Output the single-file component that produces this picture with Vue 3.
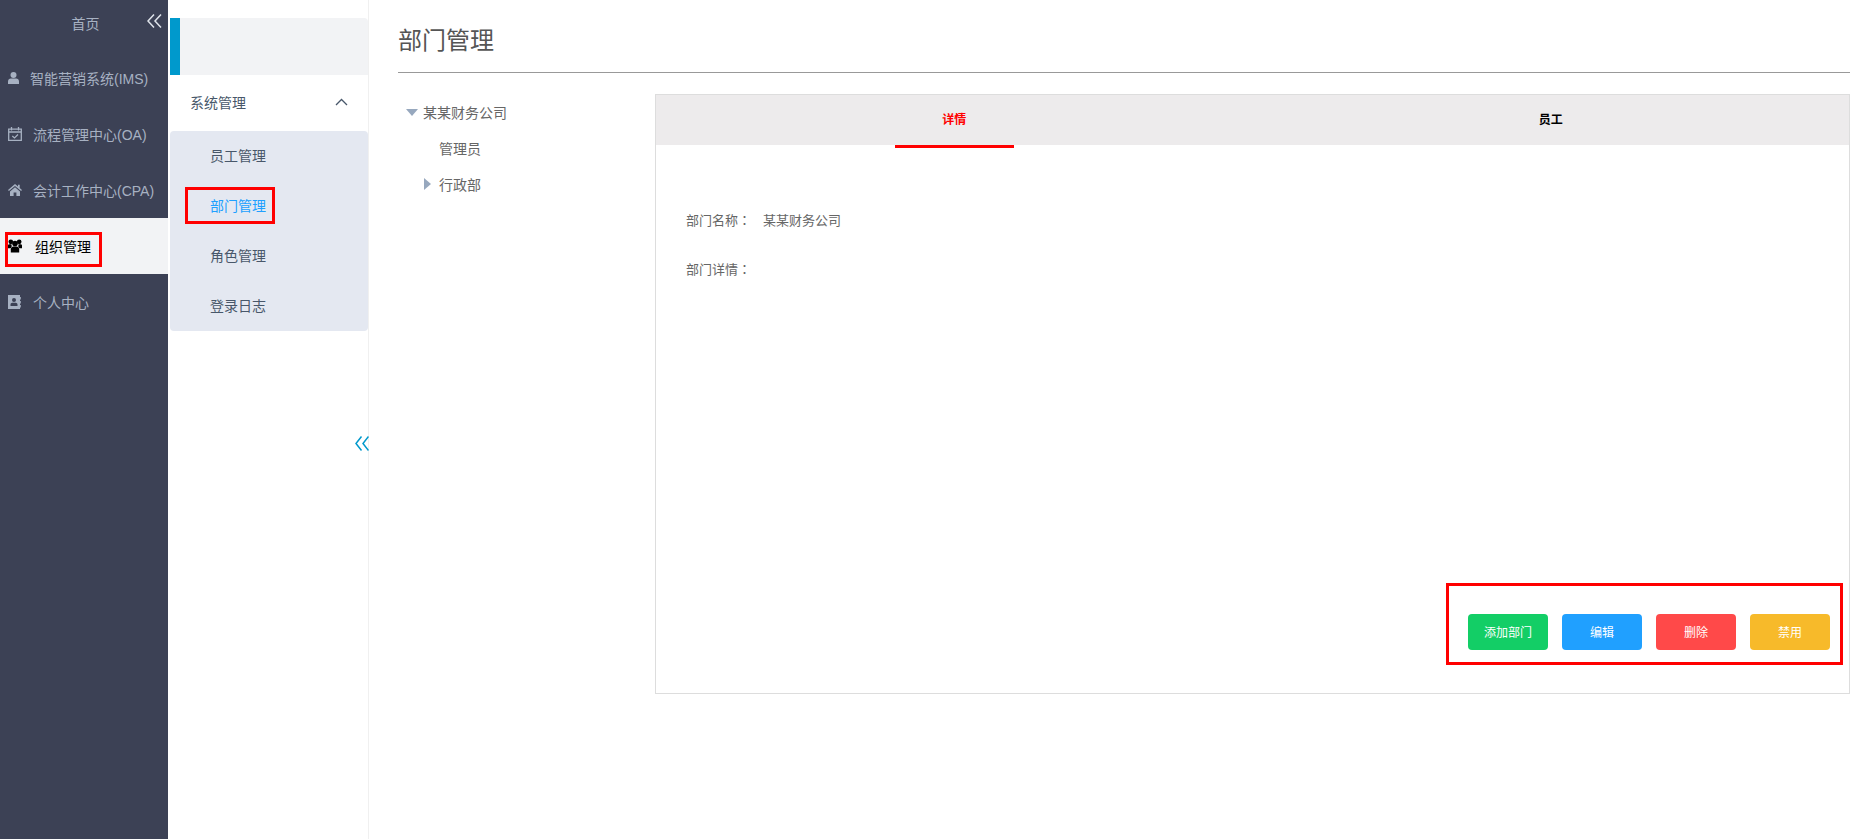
<script setup>
const navItems = [
  { label: '智能营销系统(IMS)', icon: 'user', gap: 'g1' },
  { label: '流程管理中心(OA)', icon: 'cal', gap: 'g2' },
  { label: '会计工作中心(CPA)', icon: 'home', gap: 'g3' },
  { label: '组织管理', icon: 'users', gap: 'g4', active: true },
  { label: '个人中心', icon: 'book', gap: 'g3' }
]
const subItems = [
  { label: '员工管理' },
  { label: '部门管理', active: true },
  { label: '角色管理' },
  { label: '登录日志' }
]
const buttons = [
  { label: '添加部门', color: 'green' },
  { label: '编辑', color: 'blue' },
  { label: '删除', color: 'red' },
  { label: '禁用', color: 'yellow' }
]
</script>

<template>
  <div class="page">
    <aside class="nav">
      <div class="nav-head">
        <span class="nav-home">首页</span>
        <svg class="nav-collapse" viewBox="0 0 15 14" width="15" height="14" fill="none" stroke="currentColor" stroke-width="1.5">
          <path d="M7 0.5 1 7l6 6.5M14 0.5 8 7l6 6.5" />
        </svg>
      </div>
      <div v-for="item in navItems" :key="item.label" class="nav-item" :class="{ on: item.active }">
        <span class="nav-icon">
          <svg v-if="item.icon === 'user'" viewBox="0 0 11 12" width="11" height="12" fill="currentColor">
            <circle cx="5.5" cy="3" r="3" />
            <path d="M0 12V9.2C0 7.6 1.3 6.4 2.8 6.4h5.4C9.7 6.4 11 7.6 11 9.2V12Z" />
          </svg>
          <svg v-else-if="item.icon === 'cal'" viewBox="0 0 14 14" width="14" height="14" fill="none" stroke="currentColor" stroke-width="1.3">
            <path d="M.7 2.2h12.600v11.100H.7ZM.7 5h12.600M3.500 0v3.500M10.500 0v3.500" />
            <path d="M4.300 9l2.200 1.900L10 7.500" stroke-width="1.300" />
          </svg>
          <svg v-else-if="item.icon === 'home'" viewBox="0 0 14 12" width="14" height="12" fill="currentColor">
            <path d="M7 0 0 6l.9 1L7 2l6.100 5 .9-1-2.300-2V.8H10v1.700Z" />
            <path d="M2 7.400 7 3.200l5 4.200V12H8.400V8.500H5.600V12H2Z" />
          </svg>
          <svg v-else-if="item.icon === 'users'" viewBox="0 0 15 14" width="15" height="14" fill="currentColor">
            <circle cx="3" cy="2.500" r="2.500" />
            <circle cx="12" cy="2.500" r="2.500" />
            <circle cx="7.500" cy="4.300" r="3" />
            <path d="M0 9.500V6.500C0 5.700.6 5 1.400 5h2.300L4 7.500 3 9.500H0ZM15 9.500V6.500c0-.8-.6-1.500-1.400-1.500h-2.300L11 7.500l1 2H15Z" />
            <path d="M3 14v-3.500C3 8.700 4.300 7.500 6 7.500h3c1.700 0 3 1.200 3 3V14Z" />
          </svg>
          <svg v-else viewBox="0 0 13 14" width="13" height="14" fill="currentColor">
            <path fill-rule="evenodd" d="M0 0h12v14H0ZM6 3a2 2 0 1 0 0 4 2 2 0 0 0 0-4ZM2.500 11h7V9.500C9.500 8.500 8.700 7.800 7.800 7.800H4.200C3.300 7.800 2.500 8.500 2.500 9.500Z" />
            <path d="M12.200 2H13v2.500h-.8ZM12.200 6H13v2.500h-.8ZM12.200 10H13v2.500h-.8Z" />
          </svg>
        </span>
        <span class="nav-label" :class="item.gap">{{ item.label }}</span>
        <span v-if="item.active" class="nav-mark"></span>
      </div>
    </aside>

    <aside class="side">
      <div class="side-head"><span class="side-accent"></span></div>
      <div class="side-group">
        <span>系统管理</span>
        <svg class="side-arrow" viewBox="0 0 13 8" width="13" height="8" fill="none" stroke="currentColor" stroke-width="1.300">
          <path d="M1 7 6.500 1.500 12 7" />
        </svg>
      </div>
      <div class="side-menu">
        <div v-for="item in subItems" :key="item.label" class="side-item" :class="{ on: item.active }">
          <span class="side-label">{{ item.label }}</span>
          <span v-if="item.active" class="side-mark"></span>
        </div>
      </div>
      <svg class="side-collapse" viewBox="0 0 14 15" width="14" height="15" fill="none" stroke="currentColor" stroke-width="1.500">
        <path d="M6.500 0.500 1 7.500l5.500 7M13.500 0.500 8 7.500l5.500 7" />
      </svg>
    </aside>

    <main class="main">
      <h1 class="title">部门管理</h1>
      <div class="content">
        <div class="tree">
          <div class="tree-row">
            <span class="tri-down"></span>
            <span>某某财务公司</span>
          </div>
          <div class="tree-row leaf"><span>管理员</span></div>
          <div class="tree-row child">
            <span class="tri-right"></span>
            <span>行政部</span>
          </div>
        </div>
        <section class="panel">
          <div class="tabs">
            <div class="tab on"><span>详情</span></div>
            <div class="tab"><span>员工</span></div>
          </div>
          <div class="body">
            <div class="info">
              <div class="info-row"><span class="info-key">部门名称<span class="colon">：</span></span><span>某某财务公司</span></div>
              <div class="info-row"><span class="info-key">部门详情<span class="colon">：</span></span></div>
            </div>
            <div class="actions">
              <button v-for="b in buttons" :key="b.label" class="btn" :class="b.color"><span class="btn-text">{{ b.label }}</span></button>
            </div>
          </div>
        </section>
      </div>
    </main>
  </div>
</template>

<style>
html, body { margin: 0; padding: 0; background: #fff; }
</style>

<style scoped>
.page {
  display: flex;
  width: 1875px;
  height: 839px;
  overflow: hidden;
  background: #fff;
  font-family: "Liberation Sans", "Noto Sans CJK SC", sans-serif;
  font-size: 14px;
}
.nav {
  width: 168px;
  flex: none;
  background: #3c4155;
  color: #a7b1c2;
}
.nav-head {
  height: 50px;
  position: relative;
  display: flex;
  justify-content: center;
  padding: 0 0 4px 3px;
  box-sizing: border-box;
  align-items: center;
}
.nav-collapse { position: absolute; left: 147px; top: 14px; color: #dfe3ea; }
.nav-item {
  position: relative;
  height: 56px;
  display: flex;
  align-items: center;
  padding-left: 8px;
}
.nav-item.on { background: #f2f3f5; color: #000; }
.nav-icon { width: 14px; display: flex; align-items: center; }
.nav-label.g1 { margin-left: 8px; }
.nav-label.g2 { margin-left: 11px; }
.nav-label.g3 { margin-left: 11px; }
.nav-label.g4 { margin-left: 13px; }
.nav-mark {
  position: absolute;
  left: 5px;
  top: 14px;
  width: 97px;
  height: 35px;
  box-sizing: border-box;
  border: 3px solid #f00;
}
.side {
  position: relative;
  width: 198px;
  flex: none;
  margin-left: 2px;
  border-right: 1px solid #f0f0f0;
  padding-top: 18px;
  height: 821px;
  color: #48576a;
}
.side-head {
  height: 57px;
  background: #f2f3f5;
  border-radius: 4px 4px 0 0;
  display: flex;
}
.side-accent { width: 10px; height: 57px; background: #0099cc; }
.side-group {
  height: 56px;
  box-sizing: border-box;
  display: flex;
  align-items: center;
  justify-content: space-between;
  padding: 0 20px 2px 20px;
}
.side-menu {
  background: #e4e8f1;
  border-radius: 4px;
}
.side-item {
  position: relative;
  height: 50px;
  box-sizing: border-box;
  display: flex;
  align-items: center;
  padding: 0 0 2px 40px;
}
.side-item.on { color: #20a0ff; }
.side-mark {
  position: absolute;
  left: 15px;
  top: 6px;
  width: 90px;
  height: 37px;
  box-sizing: border-box;
  border: 3px solid #f00;
}
.side-collapse { position: absolute; left: 185px; top: 436px; color: #0099cc; }
.main {
  flex: 1;
  padding-left: 29px;
  padding-right: 25px;
  min-width: 0;
  color: #48576a;
}
.title {
  margin: 0;
  height: 73px;
  box-sizing: border-box;
  border-bottom: 1px solid #999;
  font-size: 24px;
  font-weight: 400;
  line-height: 82px;
  color: #555;
}
.content { display: flex; margin-top: 21px; }
.tree { width: 257px; flex: none; }
.tree-row {
  height: 36px;
  display: flex;
  align-items: center;
  color: #666;
  padding-left: 8px;
}
.tree-row.child { padding-left: 26px; }
.tree-row.leaf { padding-left: 41px; }
.tri-down {
  width: 0;
  height: 0;
  border-left: 6px solid transparent;
  border-right: 6px solid transparent;
  border-top: 7px solid #97a8be;
  margin-right: 5px;
}
.tri-right {
  width: 0;
  height: 0;
  border-top: 6px solid transparent;
  border-bottom: 6px solid transparent;
  border-left: 7px solid #97a8be;
  margin-right: 8px;
}
.panel {
  flex: 1;
  height: 600px;
  box-sizing: border-box;
  border: 1px solid #ddd;
  min-width: 0;
}
.tabs { display: flex; height: 50px; background: #edebec; }
.tab {
  flex: 1;
  position: relative;
  box-sizing: border-box;
  padding-bottom: 4px;
  display: flex;
  align-items: center;
  justify-content: center;
  font-size: 12px;
  font-weight: 700;
  color: #000;
}
.tab.on { color: #f00; }
.tab.on::after {
  content: "";
  position: absolute;
  left: 239px;
  top: 50px;
  width: 119px;
  height: 3px;
  background: #f00;
}
.body { position: relative; height: 548px; }
.info { padding: 50px 0 0 30px; font-size: 13px; color: #666; }
.info-row { height: 49px; display: flex; align-items: center; }
.info-key { width: 77px; }
.colon { font-family: "Noto Sans CJK TC", sans-serif; }
.actions {
  position: absolute;
  right: 6px;
  top: 438px;
  width: 397px;
  height: 82px;
  box-sizing: border-box;
  border: 3px solid #f00;
  display: flex;
  align-items: flex-start;
  gap: 14px;
  padding: 28px 0 0 19px;
}
.btn {
  width: 80px;
  height: 36px;
  flex: none;
  border: 0;
  border-radius: 4px;
  padding: 0 0 2px;
  color: #fff;
  font-family: inherit;
  font-size: 12px;
}
.green { background: #13ce66; }
.blue { background: #20a0ff; }
.red { background: #ff4949; }
.yellow { background: #f7ba2a; }
</style>
